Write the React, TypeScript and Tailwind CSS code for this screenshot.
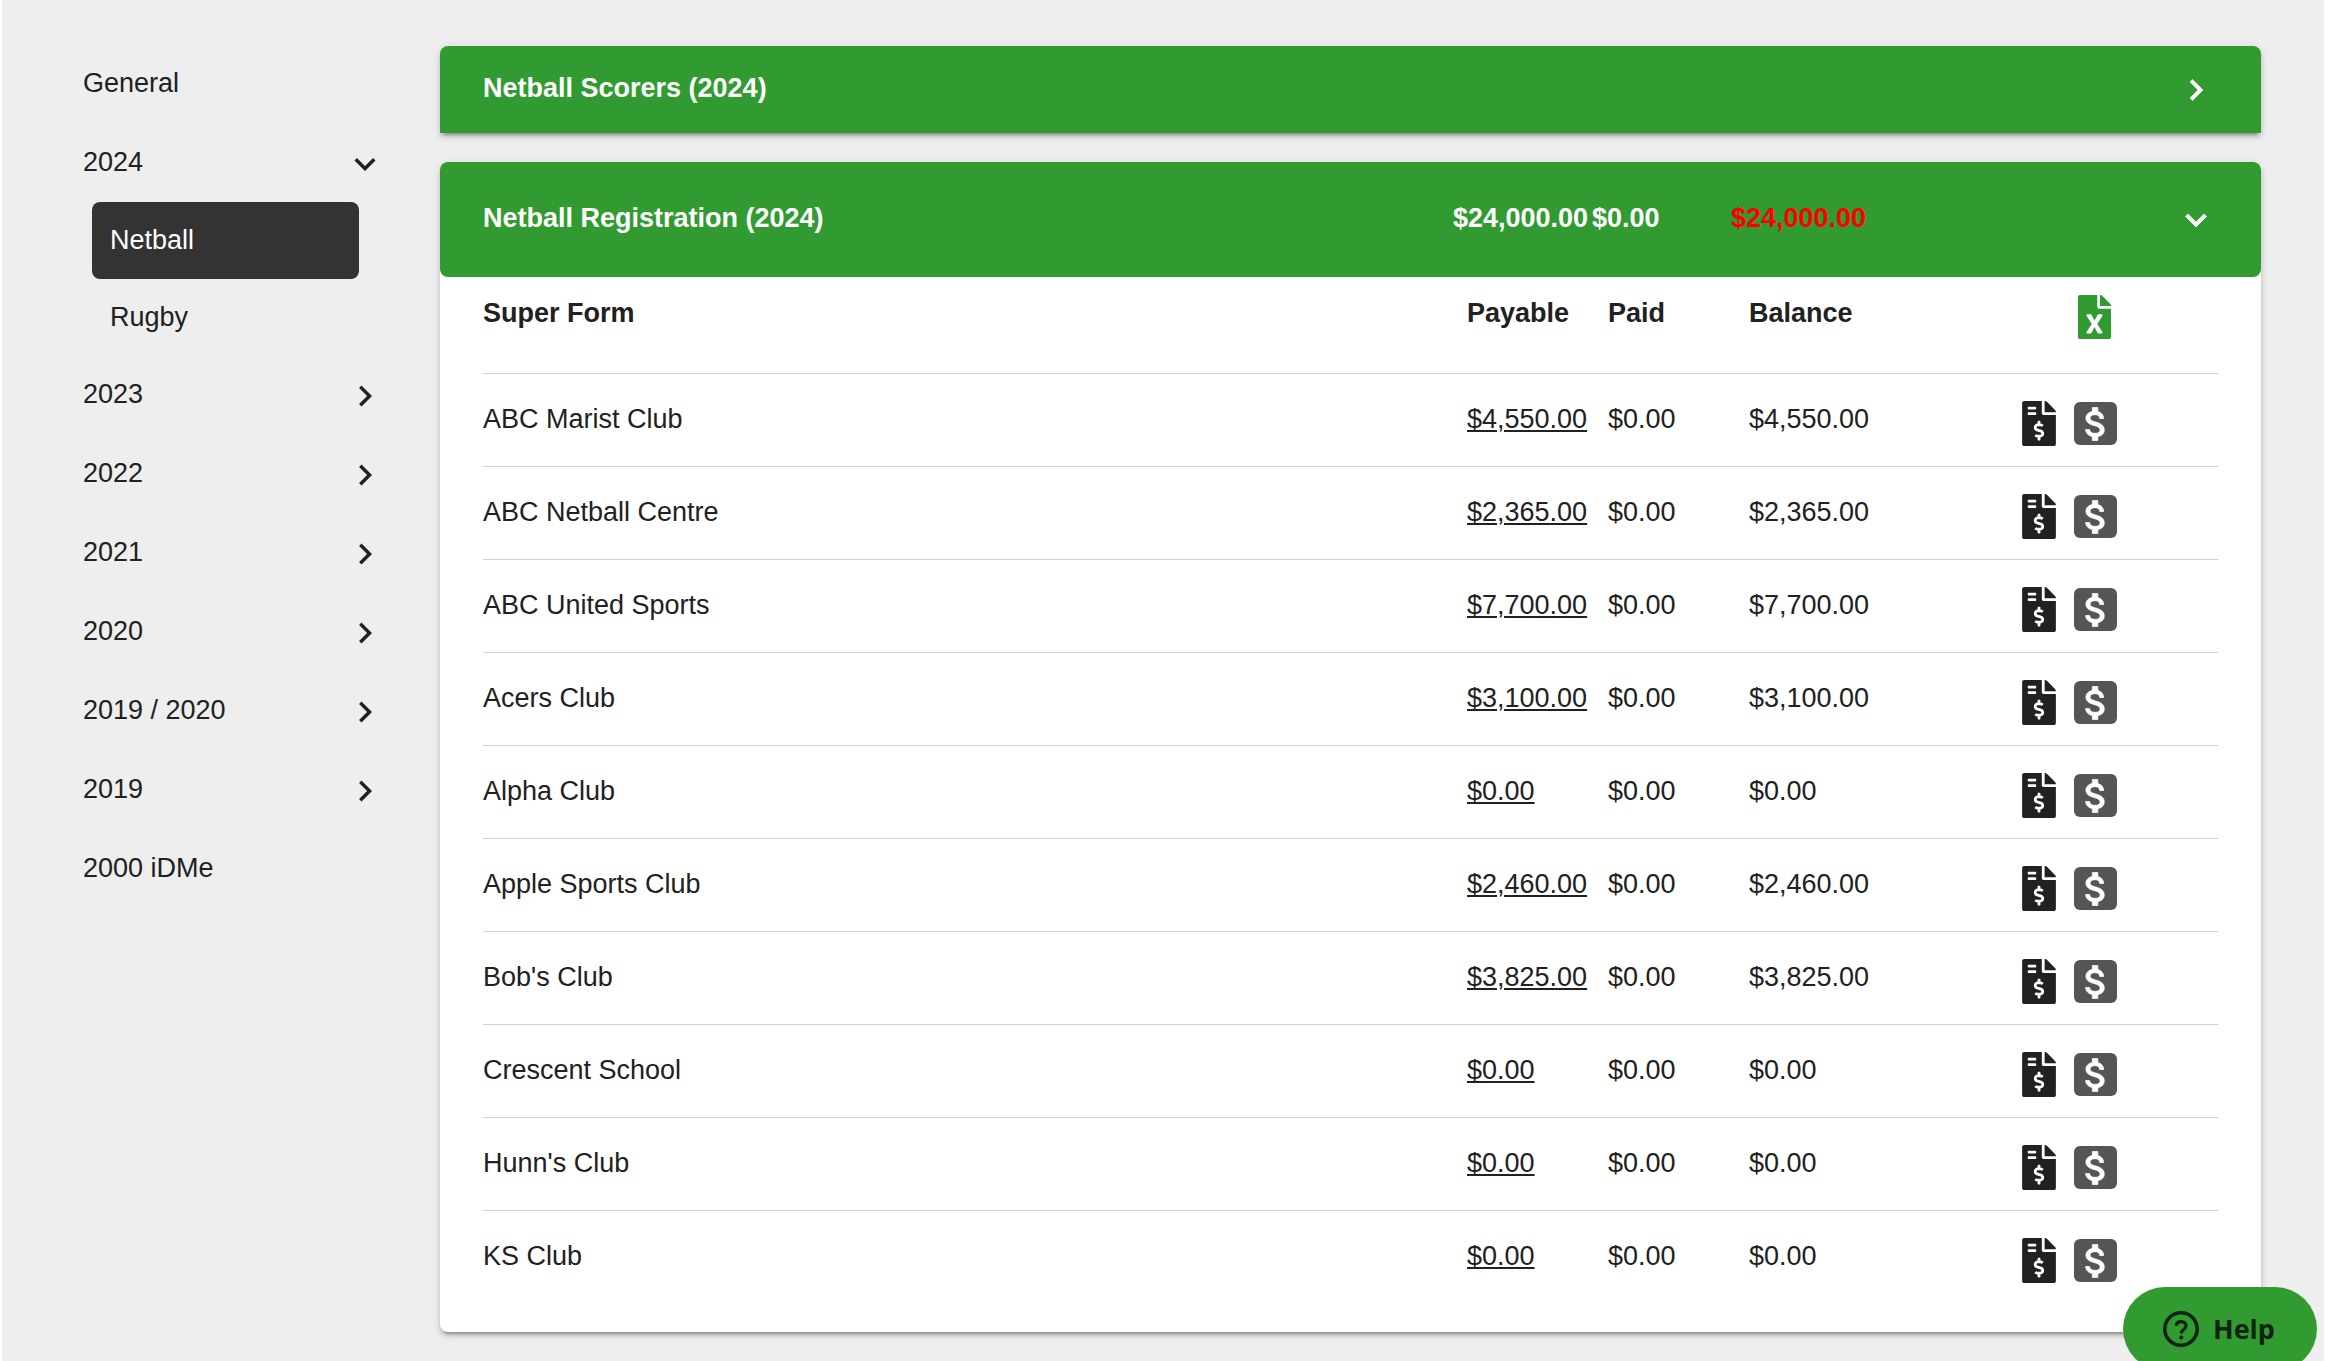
import React from 'react';
import { FaFileExcel, FaFileInvoiceDollar } from 'react-icons/fa';

interface Club {
  name: string;
  payable: string;
  paid: string;
  balance: string;
}

interface ChevronProps {
  open?: boolean;
  bold?: boolean;
}

interface SidebarItemProps {
  label: string;
  open?: boolean;
  leaf?: boolean;
}

const clubs: Club[] = [
  { name: 'ABC Marist Club', payable: '$4,550.00', paid: '$0.00', balance: '$4,550.00' },
  { name: 'ABC Netball Centre', payable: '$2,365.00', paid: '$0.00', balance: '$2,365.00' },
  { name: 'ABC United Sports', payable: '$7,700.00', paid: '$0.00', balance: '$7,700.00' },
  { name: 'Acers Club', payable: '$3,100.00', paid: '$0.00', balance: '$3,100.00' },
  { name: 'Alpha Club', payable: '$0.00', paid: '$0.00', balance: '$0.00' },
  { name: 'Apple Sports Club', payable: '$2,460.00', paid: '$0.00', balance: '$2,460.00' },
  { name: "Bob's Club", payable: '$3,825.00', paid: '$0.00', balance: '$3,825.00' },
  { name: 'Crescent School', payable: '$0.00', paid: '$0.00', balance: '$0.00' },
  { name: "Hunn's Club", payable: '$0.00', paid: '$0.00', balance: '$0.00' },
  { name: 'KS Club', payable: '$0.00', paid: '$0.00', balance: '$0.00' },
];

const years = ['2023', '2022', '2021', '2020', '2019 / 2020', '2019'];

const Chevron: React.FC<ChevronProps> = ({ open, bold }) => {
  return (
    <svg
      viewBox="0 0 24 24"
      className="size-[42px] shrink-0"
      fill="currentColor"
      stroke={bold ? 'currentColor' : 'none'}
      strokeWidth="0.4"
      aria-hidden="true"
    >
      {open ? (
        <path d="M7.41 8.59 12 13.17l4.59-4.58L18 10l-6 6-6-6z" />
      ) : (
        <path d="M8.59 16.59 13.17 12 8.59 7.41 10 6l6 6-6 6z" />
      )}
    </svg>
  );
};

const DollarSign: React.FC = () => {
  return (
    <svg viewBox="0 0 24 24" className="size-11 shrink-0" fill="currentColor" stroke="currentColor" strokeWidth="0.4" aria-hidden="true">
      <path d="M11.8 10.9c-2.27-.59-3-1.2-3-2.15 0-1.09 1.01-1.85 2.7-1.85 1.78 0 2.44.85 2.5 2.1h2.21c-.07-1.72-1.12-3.3-3.21-3.81V3h-3v2.16c-1.94.42-3.5 1.68-3.5 3.61 0 2.31 1.91 3.46 4.7 4.13 2.5.6 3 1.48 3 2.41 0 .69-.49 1.79-2.7 1.79-2.06 0-2.87-.92-2.98-2.1h-2.2c.12 2.19 1.76 3.42 3.68 3.83V21h3v-2.15c1.95-.37 3.5-1.5 3.5-3.55 0-2.84-2.43-3.81-4.7-4.4z" />
    </svg>
  );
};

const SidebarItem: React.FC<SidebarItemProps> = ({ label, open, leaf }) => {
  if (leaf) {
    return <a href="#" className="flex h-[79px] items-center">{label}</a>;
  }
  return (
    <button type="button" aria-expanded={!!open} className="flex h-[79px] w-full items-center justify-between">
      {label}
      <span className="mt-1">
        <Chevron open={open} />
      </span>
    </button>
  );
};

const Sidebar: React.FC = () => {
  return (
    <nav className="w-[438px] shrink-0 pt-[43px] pr-[54px] pl-[81px]">
      <SidebarItem label="General" leaf />
      <SidebarItem label="2024" open />
      <div className="mt-px pr-[27px] pl-[9px]">
        <a href="#" className="flex h-[77px] items-center rounded-lg bg-[#333333] px-[18px] pb-0.5 text-white">Netball</a>
        <a href="#" className="flex h-[75px] items-center px-[18px]">Rugby</a>
      </div>
      {years.map((year) => (
        <SidebarItem key={year} label={year} />
      ))}
      <SidebarItem label="2000 iDMe" leaf />
    </nav>
  );
};

const HelpButton: React.FC = () => {
  return (
    <button
      type="button"
      className="fixed right-[9px] -bottom-2.5 flex h-[84px] w-[194px] items-center gap-3.5 rounded-full bg-[#319b32] pl-10 font-['Open_Sans',sans-serif] font-bold text-[#10240f]"
    >
      <svg viewBox="0 0 36 36" className="size-9" fill="none" stroke="currentColor" aria-hidden="true">
        <circle cx="18" cy="18" r="16.2" strokeWidth="3.6" />
        <path d="M13.4 14.8c0-2.6 1.9-4.2 4.8-4.2s4.8 1.7 4.8 4.1c0 3.6-4.8 3.9-4.8 7.7" strokeWidth="3.2" />
        <circle cx="18.2" cy="26.6" r="2" fill="currentColor" stroke="none" />
      </svg>
      Help
    </button>
  );
};

const App: React.FC = () => {
  return (
    <div className="flex min-h-screen border-x-2 border-white bg-[#eeeeee] font-['Liberation_Sans',Arial,sans-serif] text-[27px] leading-8 text-[#212121]">
      <Sidebar />
      <main className="flex min-w-0 flex-1 flex-col gap-[29px] pt-[46px] pr-[63px] pb-[30px]">
        <section className="rounded-t-lg shadow-[0_6px_2px_-4px_rgba(0,0,0,0.2),0_4px_4px_0_rgba(0,0,0,0.14),0_2px_10px_0_rgba(0,0,0,0.12)]">
          <button type="button" className="flex h-[87px] w-full items-center justify-between rounded-t-lg bg-[#319b32] pr-11 pl-[43px] font-bold text-white">
            <span className="pb-1">Netball Scorers (2024)</span>
            <Chevron bold />
          </button>
        </section>

        <section className="rounded-lg bg-white shadow-[0_6px_2px_-4px_rgba(0,0,0,0.2),0_4px_4px_0_rgba(0,0,0,0.14),0_2px_10px_0_rgba(0,0,0,0.12)]">
          <button type="button" className="flex h-[115px] w-full items-center rounded-lg bg-[#319b32] pr-11 pl-[43px] text-left font-bold text-white">
            <span className="flex-1 pb-1">Netball Registration (2024)</span>
            <span className="w-[139px] pb-1">$24,000.00</span>
            <span className="w-[139px] pb-1">$0.00</span>
            <span className="w-[444px] pb-1 text-[#ff0000]">$24,000.00</span>
            <Chevron open bold />
          </button>

          <div className="px-[43px] pb-[29px]">
            <table className="w-full table-fixed text-left">
              <thead>
                <tr className="h-24 border-b border-[#d0d0d0]">
                  <th className="pb-6">Super Form</th>
                  <th className="w-[141px] pb-6">Payable</th>
                  <th className="w-[141px] pb-6">Paid</th>
                  <th className="w-[273px] pb-6">Balance</th>
                  <th className="w-[196px] pb-4">
                    <button type="button" aria-label="Export to Excel" className="ml-14 block text-[#319b32]">
                      <FaFileExcel className="h-11 w-[33px]" />
                    </button>
                  </th>
                </tr>
              </thead>
              <tbody>
                {clubs.map((club) => (
                  <tr key={club.name} className="h-[93px] border-b border-[#d0d0d0] last:border-b-0">
                    <td className="pb-0.5">{club.name}</td>
                    <td className="pb-0.5">
                      <a href="#" className="underline">{club.payable}</a>
                    </td>
                    <td className="pb-0.5">{club.paid}</td>
                    <td className="pb-0.5">{club.balance}</td>
                    <td className="pt-2">
                      <div className="flex items-center gap-[18px]">
                        <button type="button" aria-label="Invoice">
                          <FaFileInvoiceDollar className="h-[45px] w-[34px]" />
                        </button>
                        <button type="button" aria-label="Payment" className="flex size-[43px] items-center justify-center rounded-md bg-[#555555] text-white">
                          <DollarSign />
                        </button>
                      </div>
                    </td>
                  </tr>
                ))}
              </tbody>
            </table>
          </div>
        </section>
      </main>
      <HelpButton />
    </div>
  );
};

export default App;
